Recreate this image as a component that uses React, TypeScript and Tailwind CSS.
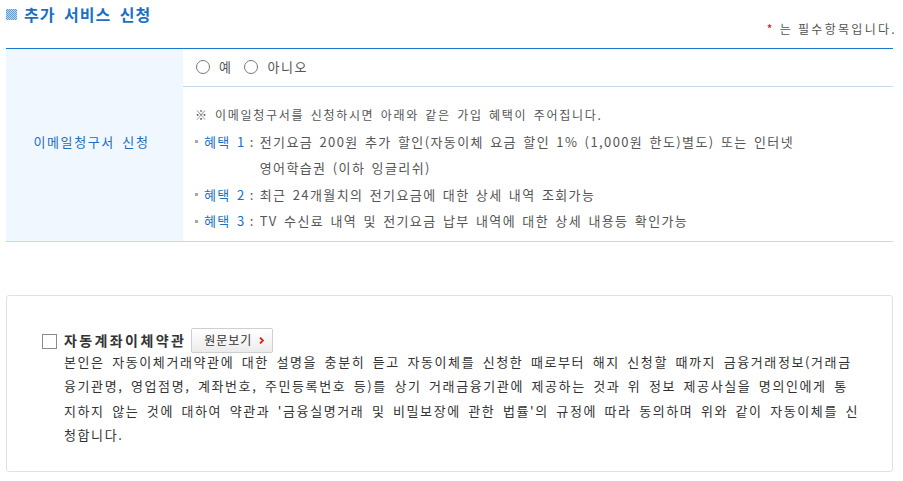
import React from "react";

const BENEFITS = [
  {
    label: "혜택 1",
    lines: [
      "전기요금 200원 추가 할인(자동이체 요금 할인 1% (1,000원 한도)별도) 또는 인터넷",
      "영어학습권 (이하 잉글리쉬)",
    ],
  },
  { label: "혜택 2", lines: ["최근 24개월치의 전기요금에 대한 상세 내역 조회가능"] },
  { label: "혜택 3", lines: ["TV 수신료 내역 및 전기요금 납부 내역에 대한 상세 내용등 확인가능"] },
];

const TERMS = [
  "본인은 자동이체거래약관에 대한 설명을 충분히 듣고 자동이체를 신청한 때로부터 해지 신청할 때까지 금융거래정보(거래금",
  "융기관명, 영업점명, 계좌번호, 주민등록번호 등)를 상기 거래금융기관에 제공하는 것과 위 정보 제공사실을 명의인에게 통",
  "지하지 않는 것에 대하여 약관과 '금융실명거래 및 비밀보장에 관한 법률'의 규정에 따라 동의하며 위와 같이 자동이체를 신",
  "청합니다.",
];

function Radio({ label }: { label: string }) {
  return (
    <label className="flex items-center gap-[9px]">
      <span className="w-[14px] h-[14px] rounded-full border border-[#777] bg-white" />
      <span>{label}</span>
    </label>
  );
}

function App() {
  return (
    <main
      className="w-[903px] h-[481px] bg-white pl-[6px] text-[#555]"
      style={{ fontFamily: '"Noto Sans CJK KR", "Noto Sans", sans-serif' }}
    >
      <div className="flex justify-between w-[887px] h-[48px]">
        <div className="flex items-center gap-[7px] h-[16px] mt-[6px]">
          <span className="w-[11px] h-[11px] bg-[repeating-conic-gradient(#5aa0de_0_25%,#b8d6f2_0_50%)] bg-[length:2px_2px]" />
          <h1 className="text-[16px] font-bold text-[#1a70c2] tracking-[1px] [word-spacing:4px] leading-none">
            추가 서비스 신청
          </h1>
        </div>
        <p className="self-end mb-[13px] text-[12px] leading-none tracking-[2.3px] -mr-[4px]">
          <span className="text-[#e60012] mr-[5px]">*</span>는 필수항목입니다.
        </p>
      </div>

      <div className="w-[887px] grid grid-cols-[177px_1fr] border-t border-[#1a78cc] border-b border-b-[#c6d9ec]">
        <div className="bg-[#f1f7fe] flex items-center justify-center pb-[6px] pr-[6px] text-[13px] text-[#1a6fbe] tracking-[1.6px] [word-spacing:3px]">
          이메일청구서 신청
        </div>
        <div>
          <div className="h-[38px] border-b border-[#c6d9ec] flex items-center gap-[12px] pl-[13px] text-[13px] tracking-[1.5px] pb-[2px]">
            <Radio label="예" />
            <Radio label="아니오" />
          </div>
          <div className="pl-[12px] pt-[15px] pb-[6px] text-[13px] leading-[26.5px] tracking-[1.4px] [word-spacing:2px]">
            <p className="text-[12px] tracking-[1.7px] whitespace-nowrap">
              ※ 이메일청구서를 신청하시면 아래와 같은 가입 혜택이 주어집니다.
            </p>
            {BENEFITS.map((b) => (
              <div key={b.label} className="flex">
                <span className="flex items-center w-[9px] h-[26.5px]">
                  <span className="w-[3px] h-[3px] bg-[#aaa]" />
                </span>
                <span className="text-[#1a70c2] whitespace-nowrap">{b.label}</span>
                <span className="whitespace-nowrap ml-[4px] mr-[5px]">:</span>
                <div>
                  {b.lines.map((l) => (
                    <p key={l} className="whitespace-nowrap">
                      {l}
                    </p>
                  ))}
                </div>
              </div>
            ))}
          </div>
        </div>
      </div>

      <section className="w-[887px] mt-[53px] h-[177px] border border-[#e1e1e1] rounded-[3px] pl-[35px] pt-[32px]">
        <div className="flex items-center h-[25px]">
          <span className="w-[15px] h-[15px] border border-[#8a8a8a] bg-white mt-[2px]" />
          <span className="ml-[7px] text-[14px] font-bold text-[#333] tracking-[2.4px] leading-none">
            자동계좌이체약관
          </span>
          <button className="ml-[5px] h-[25px] w-[82px] border border-[#cfcfcf] rounded-[2px] bg-gradient-to-b from-white to-[#ececec] text-[12px] text-[#333] flex items-center pl-[12px] tracking-[1px]">
            원문보기
            <svg className="ml-[7px]" width="5" height="7" viewBox="0 0 5 7">
              <path d="M1 0.5 L4 3.5 L1 6.5" fill="none" stroke="#e2231a" strokeWidth="1.8" />
            </svg>
          </button>
        </div>
        <div className="ml-[22px] mt-[-3px] text-[13px] text-[#333] leading-[24.6px] tracking-[1.6px] [word-spacing:3px]">
          {TERMS.map((t) => (
            <p key={t} className="whitespace-nowrap">
              {t}
            </p>
          ))}
        </div>
      </section>
    </main>
  );
}

export default App;
